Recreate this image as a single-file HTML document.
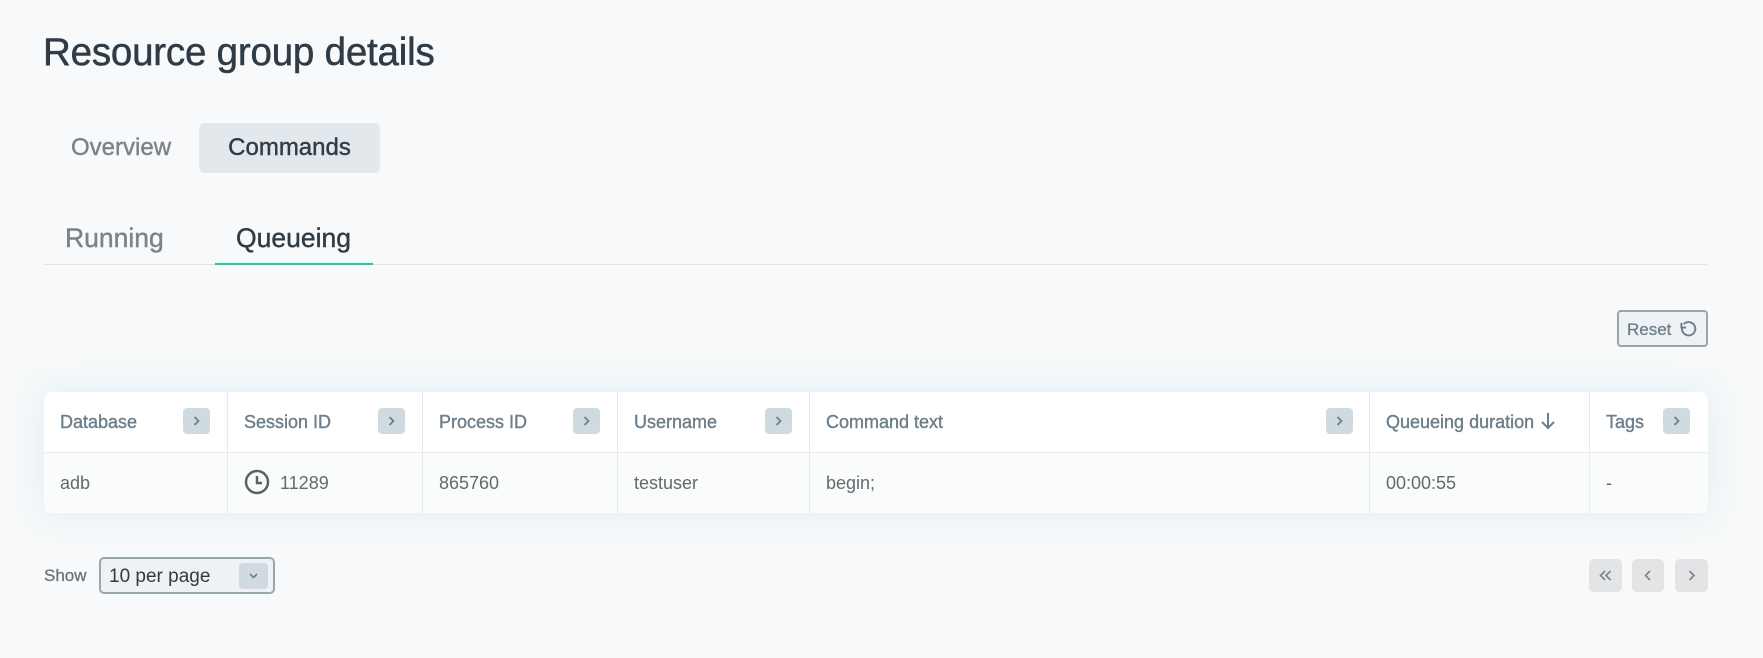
<!DOCTYPE html>
<html><head><style>
*{box-sizing:border-box;margin:0;padding:0}
body{width:1763px;height:658px;background:#f7f9fa;font-family:"Liberation Sans",sans-serif;position:relative;overflow:hidden}
.a{position:absolute}
h1{position:absolute;left:43px;top:31px;font-size:38.5px;font-weight:normal;color:#2f3b45;letter-spacing:-0.2px;-webkit-text-stroke:0.5px #2f3b45}
.tab{position:absolute;font-size:24px;line-height:50px;top:123px;color:#7c8288;-webkit-text-stroke:0.4px #7c8288}
.pill{left:199px;width:181px;height:50px;background:#e2e8ec;border-radius:6px;color:#2f3b45;-webkit-text-stroke:0.4px #2f3b45;text-align:center}
.sub{position:absolute;font-size:26.5px;top:223px;color:#7c8288;-webkit-text-stroke:0.4px #7c8288}
.chev{position:absolute;width:27px;height:26px;background:#d0dbe1;border-radius:4px;top:16px;-webkit-text-stroke:0}
.chev svg,.pg svg{position:absolute;left:0;top:0}
.th{position:absolute;top:0;height:60px;line-height:60px;font-size:18px;color:#6c7f8c;border-right:1px solid #e4eaed;padding-left:16px;-webkit-text-stroke:0.4px #6c7f8c}
.td{position:absolute;top:60px;height:61px;line-height:63px;font-size:18px;color:#626a70;border-right:1px solid #e4eaed;padding-left:16px}
.pg{position:absolute;top:559px;width:33px;height:33px;background:#e2e4e6;border-radius:5px}
</style></head><body>
<h1>Resource group details</h1>
<div class="tab" style="left:71px">Overview</div>
<div class="tab pill">Commands</div>
<div class="sub" style="left:65px">Running</div>
<div class="sub" style="left:236px;color:#2f3b45;-webkit-text-stroke:0.4px #2f3b45">Queueing</div>
<div class="a" style="left:44px;top:264px;width:1663px;height:1px;background:#dfe3e6"></div>
<div class="a" style="left:215px;top:263px;width:158px;height:2px;background:#21c995"></div>

<div class="a" style="left:1617px;top:310px;width:91px;height:37px;border:2px solid #98a6ae;border-radius:4px;background:#eef2f4;font-size:17px;color:#6c7f8c;line-height:35px;padding-left:8px;-webkit-text-stroke:0.3px #6c7f8c">Reset
<svg class="a" style="left:60px;top:8px" width="19" height="19" viewBox="0 0 20 20"><path d="M5 4.5A7 7 0 1 1 3.2 8.5" fill="none" stroke="#6c7f8c" stroke-width="2"/><path d="M2.5 3v5h5" fill="none" stroke="#6c7f8c" stroke-width="2"/></svg></div>

<div class="a" style="left:44px;top:392px;width:1664px;height:121px;background:#fff;border-radius:8px;box-shadow:0 0 30px rgba(200,225,235,0.5);overflow:hidden">
<div class="a" style="left:0;top:60px;width:1664px;height:61px;background:#fafcfc;border-top:1px solid #e4eaed"></div>
<div class="th" style="left:0;width:184px">Database<div class="chev" style="left:139px"><svg width="27" height="26"><path d="M11.5 9l4 4-4 4" fill="none" stroke="#6c7f8c" stroke-width="1.8"/></svg></div></div>
<div class="th" style="left:184px;width:195px">Session ID<div class="chev" style="left:150px"><svg width="27" height="26"><path d="M11.5 9l4 4-4 4" fill="none" stroke="#6c7f8c" stroke-width="1.8"/></svg></div></div>
<div class="th" style="left:379px;width:195px">Process ID<div class="chev" style="left:150px"><svg width="27" height="26"><path d="M11.5 9l4 4-4 4" fill="none" stroke="#6c7f8c" stroke-width="1.8"/></svg></div></div>
<div class="th" style="left:574px;width:192px">Username<div class="chev" style="left:147px"><svg width="27" height="26"><path d="M11.5 9l4 4-4 4" fill="none" stroke="#6c7f8c" stroke-width="1.8"/></svg></div></div>
<div class="th" style="left:766px;width:560px">Command text<div class="chev" style="left:516px"><svg width="27" height="26"><path d="M11.5 9l4 4-4 4" fill="none" stroke="#6c7f8c" stroke-width="1.8"/></svg></div></div>
<div class="th" style="left:1326px;width:220px">Queueing duration <svg style="vertical-align:-3px" width="18" height="20"><path d="M9 2v15M3 11l6 6 6-6" fill="none" stroke="#6c7f8c" stroke-width="2"/></svg></div>
<div class="th" style="left:1546px;width:118px;border:none">Tags<div class="chev" style="left:73px"><svg width="27" height="26"><path d="M11.5 9l4 4-4 4" fill="none" stroke="#6c7f8c" stroke-width="1.8"/></svg></div></div>

<div class="td" style="left:0;width:184px">adb</div>
<div class="td" style="left:184px;width:195px"><svg style="vertical-align:-6px;margin-right:10px" width="26" height="26"><circle cx="13" cy="13" r="11" fill="none" stroke="#5d6267" stroke-width="2.5"/><path d="M13 7v7h5" fill="none" stroke="#5d6267" stroke-width="2.5"/></svg>11289</div>
<div class="td" style="left:379px;width:195px">865760</div>
<div class="td" style="left:574px;width:192px">testuser</div>
<div class="td" style="left:766px;width:560px">begin;</div>
<div class="td" style="left:1326px;width:220px">00:00:55</div>
<div class="td" style="left:1546px;width:118px;border:none">-</div>
</div>

<div class="a" style="left:44px;top:566px;font-size:17px;color:#6c7378;-webkit-text-stroke:0.3px #6c7378">Show</div>
<div class="a" style="left:99px;top:557px;width:176px;height:37px;border:2px solid #98a6ae;border-radius:5px;background:#eef2f4;font-size:19px;color:#2f3b45;line-height:35px;padding-left:8px">10 per page
<div class="a" style="left:138px;top:4px;width:29px;height:26px;background:#d0dbe1;border-radius:4px"><svg class="a" style="left:0;top:0" width="29" height="26"><path d="M11 11l3.5 3.5L18 11" fill="none" stroke="#6c7f8c" stroke-width="1.6"/></svg></div></div>

<div class="pg" style="left:1589px"><svg width="33" height="33"><path d="M16 12l-4.5 4.5L16 21M21.5 12L17 16.5l4.5 4.5" fill="none" stroke="#7c8288" stroke-width="1.6"/></svg></div>
<div class="pg" style="left:1632px;width:32px"><svg width="32" height="33"><path d="M18 12l-4.5 4.5L18 21" fill="none" stroke="#7c8288" stroke-width="1.6"/></svg></div>
<div class="pg" style="left:1675px"><svg width="33" height="33"><path d="M14.5 12l4.5 4.5-4.5 4.5" fill="none" stroke="#7c8288" stroke-width="1.6"/></svg></div>
</body></html>
